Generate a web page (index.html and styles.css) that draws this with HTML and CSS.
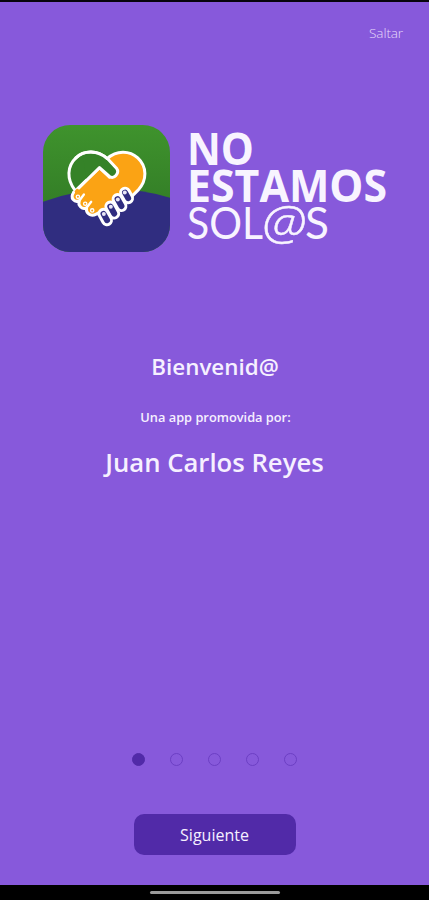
FILE: index.html
```
<!DOCTYPE html>
<html lang="es">
<head>
    <meta charset="UTF-8">
    <meta name="viewport" content="width=device-width, initial-scale=1.0">
    <title>No Estamos Sol@s</title>
    <link rel="stylesheet" href="styles.css">
</head>
<body>

    <!-- Saltar -->
    <header>
        <a href="#" class="skip">Saltar</a>
    </header>

    <main>
        <!-- Logo -->
        <div class="logo">
            <svg class="logo-icon" viewBox="20 21 382 382" aria-hidden="true">
                <defs>
                    <linearGradient id="verde" x1="0" y1="0" x2="0" y2="1">
                        <stop offset="0" stop-color="#3f932d"/>
                        <stop offset="0.6" stop-color="#347f27"/>
                    </linearGradient>
                    <clipPath id="marco">
                        <rect x="20" y="21" width="382" height="382" rx="82"/>
                    </clipPath>
                </defs>
                <g clip-path="url(#marco)">
                    <rect x="20" y="21" width="382" height="382" fill="url(#verde)"/>
                    <path d="M20 252Q212 182 402 240V403H20z" fill="#302d80"/>
                </g>
                <g stroke="#fff" stroke-width="9" stroke-linejoin="round" stroke-linecap="round">
                    <!-- Corazón -->
                    <path d="M213 122C184 97 145 95 119 120C92 145 91 185 116 217L155 260L220 190z" fill="#358228"/>
                    <path d="M213 122C241 97 280 97 305 120C333 146 334 187 306 217L294 229L224 296L188 290L112 224L190 149L220 178z" fill="#fba314"/>
                    <path d="M182 104Q200 108 213 121L241 151C252 166 233 187 219 175L190 149L150 190L143 130z" fill="#358228" stroke="none"/>
                    <path d="M213 121L241 151C252 166 233 187 219 175L190 149L112 226" fill="none"/>
                    <path d="M213 122C184 97 145 95 119 120" fill="none"/>
                    <!-- Dedos izquierdos -->
                    <path d="M112 224C100 241 115 255 129 249C124 264 138 277 151 270C148 286 163 298 180 289L200 275L146 225L122 212z" fill="#fba314" stroke="none"/>
                    <path d="M112 224C100 241 115 255 129 249C124 264 138 277 151 270C148 286 163 298 180 289L190 284" fill="none"/>
                    <path d="M129 249L143 230M151 270L165 252" fill="none" stroke-width="7"/>
                    <!-- Dedos derechos -->
                    <g fill="#302d80">
                        <rect x="258" y="210" width="27" height="46" rx="13.5" transform="rotate(-29 271 233)"/>
                        <rect x="237" y="229" width="27" height="51" rx="13.5" transform="rotate(-29 250 255)"/>
                        <rect x="215" y="251" width="27" height="51" rx="13.5" transform="rotate(-29 229 277)"/>
                        <rect x="194" y="273" width="27" height="49" rx="13.5" transform="rotate(-29 208 298)"/>
                    </g>
                </g>
                <g fill="none" stroke="#fff" stroke-width="4">
                    <circle cx="125" cy="237" r="5"/>
                    <circle cx="147" cy="258" r="5"/>
                    <circle cx="168" cy="278" r="5"/>
                </g>
                <g fill="#e8e6f5">
                    <circle cx="266" cy="224" r="6"/>
                    <circle cx="245" cy="245" r="6"/>
                    <circle cx="224" cy="267" r="6"/>
                    <circle cx="203" cy="289" r="6"/>
                </g>
            </svg>
            <svg class="logo-text" viewBox="0 0 204 130">
                <g class="logo-bold">
                    <text x="1" y="45" textLength="67" lengthAdjust="spacingAndGlyphs">NO</text>
                    <text x="1" y="81.5" textLength="200" lengthAdjust="spacingAndGlyphs">ESTAMOS</text>
                </g>
                <g class="logo-light">
                    <text x="1" y="119" textLength="76" lengthAdjust="spacingAndGlyphs">SOL</text>
                    <text class="arroba" x="76" y="119.5" textLength="44" lengthAdjust="spacingAndGlyphs">@</text>
                    <text x="119" y="119" textLength="24" lengthAdjust="spacingAndGlyphs">S</text>
                </g>
            </svg>
        </div>

        <!-- Bienvenida -->
        <div class="welcome">
            <h1>Bienvenid@</h1>
            <p>Una app promovida por:</p>
            <h2>Juan Carlos Reyes</h2>
        </div>
    </main>

    <!-- Paginación y botón -->
    <div class="actions">
        <div class="dots">
            <span class="dot active"></span>
            <span class="dot"></span>
            <span class="dot"></span>
            <span class="dot"></span>
            <span class="dot"></span>
        </div>
        <button class="next-btn">Siguiente</button>
    </div>

    <!-- Barra del sistema -->
    <footer>
        <div class="home-bar"></div>
    </footer>

</body>
</html>
```
FILE: styles.css
```
/* Estilos generales */
body {
    font-family: "Open Sans", "Noto Sans", sans-serif;
    margin: 0;
    height: 900px;
    box-sizing: border-box;
    border-top: 2px solid #08050d;
    display: flex;
    flex-direction: column;
    background-color: #8759db;
    color: #f6f0ff;
}
header {
    display: flex;
    justify-content: flex-end;
    padding: 22px 26px 0 0;
    height: 20px;
}
.skip {
    color: #e6dafa;
    text-decoration: none;
    font-size: 13.5px;
    font-weight: 300;
    line-height: 19px;
    letter-spacing: -0.1px;
}
main {
    flex: 1;
}

/* Logo */
.logo {
    display: flex;
    align-items: flex-start;
    padding: 81px 0 0 43px;
}
.logo-icon {
    width: 127px;
    height: 127px;
}
.logo-text {
    width: 204px;
    height: 130px;
    margin: -5px 0 0 16px;
    fill: #f8f4ff;
    overflow: visible;
}
.logo-bold {
    font-size: 45px;
    font-weight: 700;
}
.logo-light {
    font-size: 44px;
    font-weight: 400;
    font-family: Lato, sans-serif;
}
.arroba {
    font-family: "Open Sans", sans-serif;
    font-style: italic;
    font-weight: 300;
    font-size: 48px;
    stroke: #f8f4ff;
    stroke-width: 0.5px;
}

/* Bienvenida */
.welcome {
    text-align: center;
    padding-top: 100px;
}
.welcome h1 {
    font-size: 22.4px;
    font-weight: 600;
    line-height: 30px;
    margin: 0 0 0 1px;
}
.welcome p {
    font-size: 12.8px;
    font-weight: 600;
    line-height: 18px;
    margin: 26px 0 19px 2px;
}
.welcome h2 {
    font-size: 25.7px;
    font-weight: 600;
    line-height: 36px;
    margin: 0;
}

/* Paginación y botón */
.actions {
    display: flex;
    flex-direction: column;
    align-items: center;
    padding-bottom: 30px;
}
.dots {
    display: flex;
    gap: 25px;
    margin-bottom: 48px;
}
.dot {
    width: 13px;
    height: 13px;
    box-sizing: border-box;
    border: 1px solid #6c3fc4;
    border-radius: 50%;
}
.dot.active {
    background-color: #512aa8;
    border-color: #512aa8;
}
.next-btn {
    width: 162px;
    height: 41px;
    border: none;
    border-radius: 10px;
    background-color: #512aa8;
    color: #f6f0ff;
    font-family: inherit;
    font-size: 16px;
    cursor: pointer;
}

/* Barra del sistema */
footer {
    height: 15px;
    background-color: #000;
    display: flex;
    justify-content: center;
    align-items: center;
}
.home-bar {
    width: 130px;
    height: 3px;
    border-radius: 2px;
    background-color: #9b9b9b;
}
```
